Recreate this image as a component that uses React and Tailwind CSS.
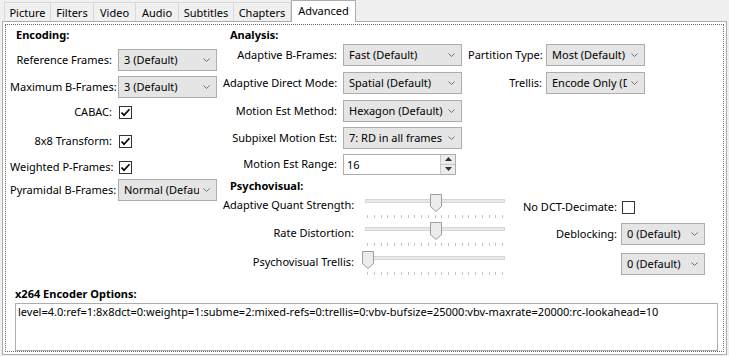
import React from 'react';

const tabs = [
  ['Picture', 'w-[47px]'],
  ['Filters', 'w-[43px]'],
  ['Video', 'w-[42px]'],
  ['Audio', 'w-[43px]'],
  ['Subtitles', 'w-[55px]'],
  ['Chapters', 'w-[57px]'],
];

function TabStrip() {
  return (
    <div className="flex h-[21px] items-end pl-[2px]">
      {tabs.map(([name, w], i) => (
        <div
          key={name}
          className={`flex h-[19px] items-center justify-center border-t border-r border-[#d9d9d9] bg-[#f0f0f0] pt-px ${w} ${i === 0 ? 'border-l' : ''}`}
        >
          {name}
        </div>
      ))}
      <div className="relative z-10 -mb-px flex h-[22px] w-[65px] items-center justify-center border-x border-t border-[#adadad] bg-white pb-[2px]">
        Advanced
      </div>
    </div>
  );
}

function Chevron() {
  return (
    <svg className="mr-[6px] ml-[4px] shrink-0" width="7" height="4" viewBox="0 0 7 4">
      <path d="M0.5 0.5 L3.5 3.5 L6.5 0.5" stroke="#6e6e6e" strokeWidth="1" fill="none" />
    </svg>
  );
}

function Combo({ value, w }) {
  return (
    <div className={`flex h-[22px] shrink-0 items-center border border-[#adadad] bg-[#e5e5e5] ${w}`}>
      <span className="min-w-0 flex-1 overflow-hidden whitespace-nowrap pl-[5px]">{value}</span>
      <Chevron />
    </div>
  );
}

function Check({ on }) {
  return (
    <span className="flex h-[13px] w-[13px] shrink-0 items-center justify-center border border-[#333333] bg-white">
      {on && (
        <svg width="11" height="11" viewBox="0 0 11 11">
          <path d="M1.5 5.5 L4 8.2 L9.5 2.2" stroke="#000" strokeWidth="1.7" fill="none" />
        </svg>
      )}
    </span>
  );
}

function Row({ label, labelW, gap, children, className = '' }) {
  return (
    <div className={`flex h-[22px] items-center ${className}`}>
      <span className={`shrink-0 whitespace-nowrap text-right ${labelW} ${gap}`}>{label}</span>
      {children}
    </div>
  );
}

function SpinBox() {
  return (
    <div className="flex h-[21px] w-[113px] border border-[#adadad] bg-white">
      <span className="flex-1 pl-[3px] leading-[19px]">16</span>
      <div className="flex w-[15px] flex-col">
        <div className="flex flex-1 items-center justify-center border-b border-l border-[#c8c8c8] bg-[#ececec]">
          <svg width="7" height="4" viewBox="0 0 7 4"><path d="M0 4 L3.5 0 L7 4 Z" fill="#333" /></svg>
        </div>
        <div className="flex flex-1 items-center justify-center border-l border-[#c8c8c8] bg-[#ececec]">
          <svg width="7" height="4" viewBox="0 0 7 4"><path d="M0 0 L3.5 4 L7 0 Z" fill="#333" /></svg>
        </div>
      </div>
    </div>
  );
}

function Slider({ thumb }) {
  return (
    <div className="relative h-[26px] w-[140px] shrink-0">
      <div className="absolute top-[5px] right-0 left-0 h-[4px] border border-[#d6d6d6] bg-[#e7eaea]" />
      <svg className={`absolute top-0 ${thumb}`} width="12" height="18" viewBox="0 0 12 18">
        <path d="M0.5 0.5 H11.5 V12.5 L6 17.5 L0.5 12.5 Z" fill="#ececec" stroke="#9c9c9c" strokeWidth="1" />
      </svg>
      <div className="absolute top-[21px] right-[2px] left-[2px] flex justify-between">
        {Array.from({ length: 21 }).map((_, i) => (
          <span key={i} className="h-[3px] w-px bg-[#c4c4c4]" />
        ))}
      </div>
    </div>
  );
}

function EncodingColumn() {
  return (
    <div className="flex w-[211px] shrink-0 flex-col pl-[4px]">
      <div className="pl-[6px] font-bold">Encoding:</div>
      <Row label="Reference Frames:" labelW="w-[102px]" gap="mr-[6px]" className="mt-[6px]">
        <Combo value="3 (Default)" w="w-[99px]" />
      </Row>
      <Row label="Maximum B-Frames:" labelW="w-[102px]" gap="mr-[6px]" className="mt-[5px]">
        <Combo value="3 (Default)" w="w-[99px]" />
      </Row>
      <Row label="CABAC:" labelW="w-[102px]" gap="mr-[7px]" className="mt-[3px]">
        <Check on />
      </Row>
      <Row label="8x8 Transform:" labelW="w-[102px]" gap="mr-[7px]" className="mt-[7px]">
        <Check on />
      </Row>
      <Row label="Weighted P-Frames:" labelW="w-[102px]" gap="mr-[7px]" className="mt-[4px]">
        <Check on />
      </Row>
      <Row label="Pyramidal B-Frames:" labelW="w-[102px]" gap="mr-[6px]" className="mt-px">
        <Combo value="Normal (Default)" w="w-[99px]" />
      </Row>
    </div>
  );
}

function AnalysisBlock() {
  return (
    <div className="flex flex-col">
      <div className="pl-[7px] font-bold">Analysis:</div>
      <div className="mt-px flex">
        <div className="flex flex-col">
          <Row label="Adaptive B-Frames:" labelW="w-[114px]" gap="mr-[6px]">
            <Combo value="Fast (Default)" w="w-[119px]" />
          </Row>
          <Row label="Adaptive Direct Mode:" labelW="w-[114px]" gap="mr-[6px]" className="mt-[6px]">
            <Combo value="Spatial (Default)" w="w-[119px]" />
          </Row>
          <Row label="Motion Est Method:" labelW="w-[114px]" gap="mr-[6px]" className="mt-[6px]">
            <Combo value="Hexagon (Default)" w="w-[119px]" />
          </Row>
          <Row label="Subpixel Motion Est:" labelW="w-[114px]" gap="mr-[6px]" className="mt-[5px]">
            <Combo value="7: RD in all frames" w="w-[119px]" />
          </Row>
          <Row label="Motion Est Range:" labelW="w-[114px]" gap="mr-[6px]" className="mt-[4px]">
            <SpinBox />
          </Row>
        </div>
        <div className="ml-[6px] flex flex-col">
          <Row label="Partition Type:" labelW="w-[74px]" gap="mr-[4px]">
            <Combo value="Most (Default)" w="w-[99px]" />
          </Row>
          <Row label="Trellis:" labelW="w-[74px]" gap="mr-[4px]" className="mt-[6px]">
            <Combo value="Encode Only (Default)" w="w-[99px]" />
          </Row>
        </div>
      </div>
    </div>
  );
}

function PsychoBlock() {
  const sliders = [
    ['Adaptive Quant Strength:', 'left-[65px]'],
    ['Rate Distortion:', 'left-[65px]'],
    ['Psychovisual Trellis:', 'left-[-3px]'],
  ];
  return (
    <div className="mt-[3px] flex flex-col">
      <div className="pl-[7px] font-bold">Psychovisual:</div>
      <div className="flex">
        <div className="flex flex-col">
          {sliders.map(([label, thumb], i) => (
            <div key={label} className={`flex items-start ${i === 0 ? '' : i === 1 ? 'mt-[2px]' : 'mt-[3px]'}`}>
              <span className="mt-[3px] mr-[11px] w-[131px] shrink-0 whitespace-nowrap text-right">{label}</span>
              <Slider thumb={thumb} />
            </div>
          ))}
        </div>
        <div className="flex flex-col">
          <Row label="No DCT-Decimate:" labelW="w-[112px]" gap="mr-[5px]" className="mt-[2px]">
            <Check />
          </Row>
          <Row label="Deblocking:" labelW="w-[112px]" gap="mr-[4px]" className="mt-[5px]">
            <Combo value="0 (Default)" w="w-[84px]" />
          </Row>
          <Row label="" labelW="w-[112px]" gap="mr-[4px]" className="mt-[8px]">
            <Combo value="0 (Default)" w="w-[84px]" />
          </Row>
        </div>
      </div>
    </div>
  );
}

export default function App() {
  return (
    <div className="h-[356px] w-[729px] overflow-hidden bg-[#f0f0f0] px-[2px] font-['Segoe_UI','Noto_Sans',sans-serif] text-[11px] leading-[16px] text-black">
      <TabStrip />
      <div className="h-[334px] w-[725px] border border-[#adadad] bg-white p-[2px]">
        <div className="flex h-full flex-col border border-dotted border-[#6b6b6b] pt-[2px]">
          <div className="flex">
            <EncodingColumn />
            <div className="ml-[6px] flex flex-col">
              <AnalysisBlock />
              <PsychoBlock />
            </div>
          </div>
          <div className="mt-[9px] ml-[9px] font-bold">x264 Encoder Options:</div>
          <div className="mt-px ml-[9px] h-[49px] w-[703px] border border-[#abadb3] pl-[2px]">
            level=4.0:ref=1:8x8dct=0:weightp=1:subme=2:mixed-refs=0:trellis=0:vbv-bufsize=25000:vbv-maxrate=20000:rc-lookahead=10
          </div>
        </div>
      </div>
    </div>
  );
}
